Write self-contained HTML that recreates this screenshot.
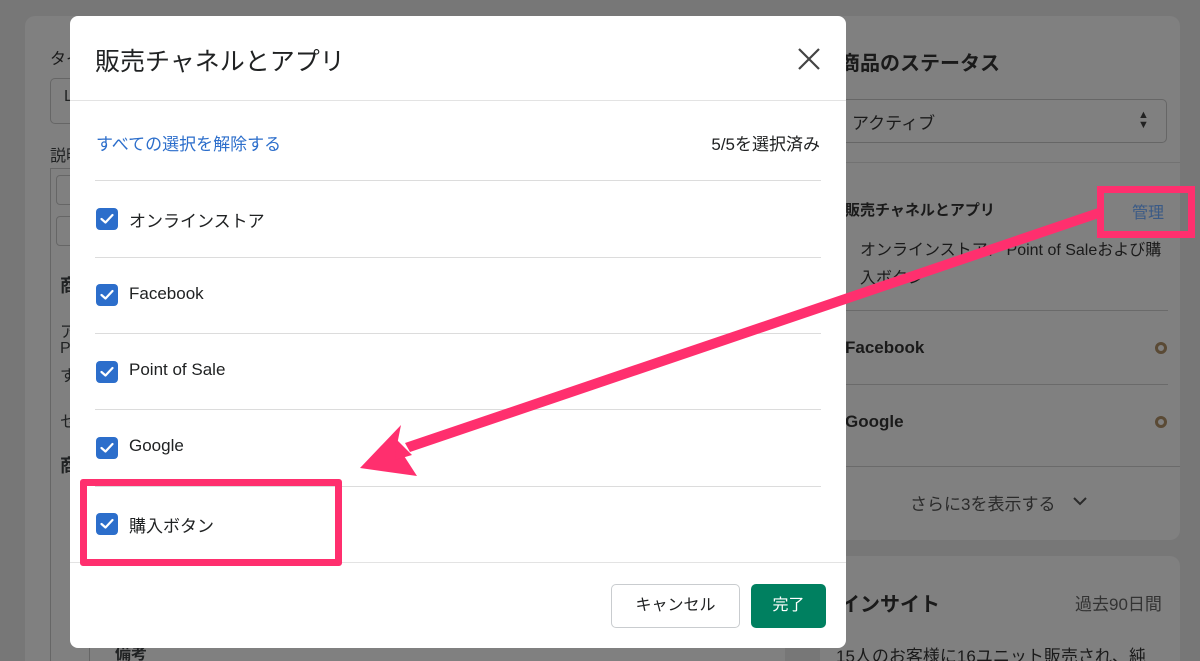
<!DOCTYPE html>
<html style="overflow:hidden;width:1200px;height:661px"><head><meta charset="utf-8">
<style>
*{margin:0;padding:0;box-sizing:border-box}
body{width:1200px;height:661px;overflow:hidden;background:#777;position:relative;font-family:"Liberation Sans","Noto Sans CJK JP",sans-serif;color:#202223}
.abs{position:absolute}
.card{position:absolute;background:#808080;border-radius:10px}
.t{position:absolute;white-space:nowrap}
.modal{position:absolute;left:70px;top:16px;width:776px;height:632px;background:#fff;border-radius:8px;overflow:hidden}
.hr{position:absolute;height:1px;background:#dcdcdc}
.cb{position:absolute;left:26px;width:22px;height:22px;border-radius:4px;background:#2c6ecb}
.cb svg{position:absolute;left:4px;top:5px}
.lbl{position:absolute;left:59px;font-size:17px;color:#202223;white-space:nowrap}
</style></head><body>
<div class="card" style="left:25px;top:16px;width:760px;height:645px;border-radius:10px 10px 0 0"></div>
<div class="t" style="left:50px;top:45px;font-size:16px;color:#1a1a1a">タイ</div>
<div class="abs" style="left:50px;top:78px;width:40px;height:46px;border:1px solid #666;border-radius:5px"></div>
<div class="t" style="left:64px;top:88px;font-size:16px">L</div>
<div class="t" style="left:50px;top:142px;font-size:16px">説明</div>
<div class="abs" style="left:50px;top:168px;width:40px;height:493px;border:1px solid #666;border-bottom:none"></div>
<div class="abs" style="left:56px;top:175px;width:30px;height:30px;border:1px solid #666;border-radius:4px"></div>
<div class="abs" style="left:56px;top:216px;width:30px;height:30px;border:1px solid #666;border-radius:4px"></div>
<div class="t" style="left:60px;top:272px;font-size:18px;font-weight:bold">商</div>
<div class="t" style="left:60px;top:318px;font-size:16px">ア</div>
<div class="t" style="left:60px;top:340px;font-size:16px">P</div>
<div class="t" style="left:60px;top:362px;font-size:16px">す</div>
<div class="t" style="left:60px;top:408px;font-size:16px">セ</div>
<div class="t" style="left:60px;top:452px;font-size:18px;font-weight:bold">商</div>
<div class="t" style="left:115px;top:640px;font-size:16px;font-weight:bold">備考</div>

<div class="card" style="left:820px;top:16px;width:360px;height:524px"></div>
<div class="t" style="left:840px;top:47px;font-size:20px;font-weight:bold;color:#1a1a1a">商品のステータス</div>
<div class="abs" style="left:835px;top:99px;width:332px;height:44px;border:1px solid #666;border-radius:5px"></div>
<div class="t" style="left:852px;top:109px;font-size:17px;color:#1a1a1a">アクティブ</div>
<div class="t" style="left:1138px;top:110px;font-size:11px;line-height:10px;color:#222">▲<br>▼</div>
<div class="abs" style="left:820px;top:162px;width:360px;height:1px;background:#727272"></div>
<div class="t" style="left:845px;top:199px;font-size:15px;font-weight:bold;color:#1a1a1a">販売チャネルとアプリ</div>
<div class="t" style="left:1132px;top:199px;font-size:16px;color:#3a5a86">管理</div>
<div class="abs" style="left:838px;top:244px;width:8px;height:8px;border-radius:50%;background:#2a6a45"></div>
<div class="t" style="left:860px;top:237px;font-size:16px;color:#1a1a1a;line-height:28px">オンラインストア、 Point of Saleおよび購<br>入ボタン</div>
<div class="abs" style="left:840px;top:310px;width:328px;height:1px;background:#6a6a6a"></div>
<div class="t" style="left:845px;top:338px;font-size:17px;font-weight:bold;color:#1a1a1a">Facebook</div>
<div class="abs" style="left:1155px;top:342px;width:12px;height:12px;border:3px solid #5a4a35;border-radius:50%"></div>
<div class="abs" style="left:840px;top:384px;width:328px;height:1px;background:#6a6a6a"></div>
<div class="t" style="left:845px;top:412px;font-size:17px;font-weight:bold;color:#1a1a1a">Google</div>
<div class="abs" style="left:1155px;top:416px;width:12px;height:12px;border:3px solid #5a4a35;border-radius:50%"></div>
<div class="abs" style="left:820px;top:466px;width:360px;height:1px;background:#6a6a6a"></div>
<div class="t" style="left:910px;top:490px;font-size:17px;color:#2a2a2a">さらに3を表示する</div>
<svg class="abs" style="left:1072px;top:495px" width="16" height="12" viewBox="0 0 16 12"><path d="M2 3L8 9L14 3" fill="none" stroke="#2a2a2a" stroke-width="2"/></svg>

<div class="card" style="left:820px;top:556px;width:360px;height:105px;border-radius:10px 10px 0 0"></div>
<div class="t" style="left:840px;top:588px;font-size:20px;font-weight:bold;color:#1a1a1a">インサイト</div>
<div class="t" style="left:1075px;top:590px;font-size:17px;color:#333">過去90日間</div>
<div class="t" style="left:836px;top:642px;font-size:17px;color:#1a1a1a">15人のお客様に16ユニット販売され、純</div>

<div class="modal">
  <div class="t" style="left:25px;top:26px;font-size:25px;color:#202223">販売チャネルとアプリ</div>
  <svg class="abs" style="left:728px;top:32px" width="22" height="22" viewBox="0 0 22 22"><path d="M1 1L21 21M21 1L1 21" stroke="#444" stroke-width="2.2"/></svg>
  <div class="hr" style="left:0;top:84px;width:776px;background:#e3e3e3"></div>
  <div class="t" style="left:26px;top:114px;font-size:17px;color:#2c6ecb">すべての選択を解除する</div>
  <div class="t" style="right:26px;top:114px;font-size:17px;color:#202223">5/5を選択済み</div>
  <div class="hr" style="left:25px;top:164px;width:726px"></div>
  <div class="hr" style="left:25px;top:241px;width:726px"></div>
  <div class="hr" style="left:25px;top:317px;width:726px"></div>
  <div class="hr" style="left:25px;top:393px;width:726px"></div>
  <div class="hr" style="left:25px;top:470px;width:726px"></div>
  <div class="hr" style="left:0;top:546px;width:776px;background:#e3e3e3"></div>

  <div class="cb" style="top:192px"><svg width="14" height="12" viewBox="0 0 14 12"><path d="M1.5 6L5.5 9.5L12.5 2" fill="none" stroke="#fff" stroke-width="2.2" stroke-linecap="round" stroke-linejoin="round"/></svg></div>
  <div class="lbl" style="top:191px">オンラインストア</div>
  <div class="cb" style="top:268px"><svg width="14" height="12" viewBox="0 0 14 12"><path d="M1.5 6L5.5 9.5L12.5 2" fill="none" stroke="#fff" stroke-width="2.2" stroke-linecap="round" stroke-linejoin="round"/></svg></div>
  <div class="lbl" style="top:268px">Facebook</div>
  <div class="cb" style="top:345px"><svg width="14" height="12" viewBox="0 0 14 12"><path d="M1.5 6L5.5 9.5L12.5 2" fill="none" stroke="#fff" stroke-width="2.2" stroke-linecap="round" stroke-linejoin="round"/></svg></div>
  <div class="lbl" style="top:344px">Point of Sale</div>
  <div class="cb" style="top:421px"><svg width="14" height="12" viewBox="0 0 14 12"><path d="M1.5 6L5.5 9.5L12.5 2" fill="none" stroke="#fff" stroke-width="2.2" stroke-linecap="round" stroke-linejoin="round"/></svg></div>
  <div class="lbl" style="top:420px">Google</div>
  <div class="cb" style="top:497px"><svg width="14" height="12" viewBox="0 0 14 12"><path d="M1.5 6L5.5 9.5L12.5 2" fill="none" stroke="#fff" stroke-width="2.2" stroke-linecap="round" stroke-linejoin="round"/></svg></div>
  <div class="lbl" style="top:496px">購入ボタン</div>

  <div class="abs" style="left:541px;top:568px;width:129px;height:44px;border:1px solid #c9cccf;border-radius:5px;font-size:16px;text-align:center;line-height:42px;color:#202223">キャンセル</div>
  <div class="abs" style="left:681px;top:568px;width:75px;height:44px;background:#008060;border-radius:5px;font-size:16px;text-align:center;line-height:44px;color:#fff">完了</div>
</div>

<div class="abs" style="left:80px;top:479px;width:262px;height:87px;border:7px solid #ff2f6e;border-radius:3px"></div>
<div class="abs" style="left:1097px;top:186px;width:98px;height:52px;border:7px solid #ff2f6e"></div>
<svg class="abs" style="left:0;top:0" width="1200" height="661">
  <polygon points="1098,208 1102,217 410,452 405,443" fill="#ff2f6e"/>
  <polygon points="360,468 401,425 397,445 417,476" fill="#ff2f6e"/>
  <polygon points="397,440 412,455 395,460" fill="#ff2f6e"/>
</svg>
</body></html>
